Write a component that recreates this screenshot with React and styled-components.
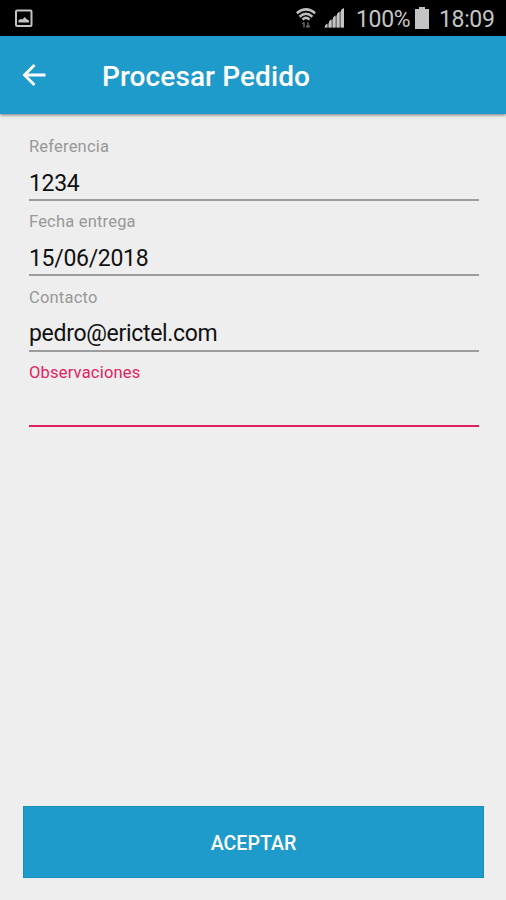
import styled, { createGlobalStyle } from "styled-components";

const GlobalStyle = createGlobalStyle`
  * {
    box-sizing: border-box;
  }

  body {
    margin: 0;
    font-family: Roboto, "Liberation Sans", sans-serif;
    background: #eeeeee;
  }
`;

const Screen = styled.div`
  display: flex;
  flex-direction: column;
  width: 506px;
  height: 900px;
  overflow: hidden;
  background: #eeeeee;
`;

const StatusBar = styled.div`
  display: flex;
  align-items: center;
  justify-content: space-between;
  height: 36px;
  padding: 0 11px 0 14px;
  background: #000;
  color: #c4c4c4;
  flex-shrink: 0;
`;

const StatusGroup = styled.div`
  display: flex;
  align-items: center;
`;

const StatusText = styled.span`
  width: ${({ $width }) => $width}px;
  margin-left: ${({ $gap }) => $gap}px;
  padding-top: 3px;
  font-size: 23px;
  line-height: 33px;
  letter-spacing: -0.35px;
  white-space: nowrap;
`;

const StatusIcon = styled.svg`
  display: block;
  margin-left: ${({ $gap }) => $gap || 0}px;
`;

const AppBar = styled.header`
  display: flex;
  align-items: center;
  height: 78px;
  padding: 0 22px;
  background: #1f9bcb;
  box-shadow: 0 1px 3px rgba(0, 0, 0, 0.5);
  flex-shrink: 0;
`;

const BackButton = styled.button`
  display: flex;
  width: 80px;
  padding: 0;
  border: none;
  background: none;
  color: #fff;
`;

const Title = styled.h1`
  margin: 0;
  padding-top: 3px;
  font-size: 28px;
  font-weight: 500;
  line-height: 36px;
  letter-spacing: 0.1px;
  color: #fff;
`;

const Form = styled.form`
  display: flex;
  flex-direction: column;
  flex: 1;
  padding: 22px 22px 22px 23px;
`;

const Fields = styled.div`
  display: flex;
  flex-direction: column;
  flex: 1;
  padding: 0 5px 0 6px;
`;

const Field = styled.label`
  display: flex;
  flex-direction: column;
  height: 75.3px;
  color: ${({ $active }) => ($active ? "#e32160" : "#989898")};
`;

const FieldLabel = styled.span`
  font-size: 16.5px;
  line-height: 21px;
  letter-spacing: 0.2px;
`;

const FieldInput = styled.input`
  width: 100%;
  height: 44px;
  padding: 10px 0 0;
  border: none;
  border-bottom: 2px solid ${({ $active }) => ($active ? "#e0215d" : "#9c9c9c")};
  border-radius: 0;
  outline: none;
  background: none;
  font-family: inherit;
  font-size: 23px;
  letter-spacing: -0.31px;
  color: #111;
`;

const SubmitButton = styled.button`
  height: 72px;
  padding: 2px 0 0;
  border: 1px solid #168fbe;
  background: #1f9bcb;
  font-family: inherit;
  font-size: 19.6px;
  font-weight: 500;
  color: #fff;
`;

const fields = [
  { id: "referencia", label: "Referencia", value: "1234" },
  { id: "fecha", label: "Fecha entrega", value: "15/06/2018" },
  { id: "contacto", label: "Contacto", value: "pedro@erictel.com" },
  { id: "observaciones", label: "Observaciones", value: "", active: true },
];

const PictureIcon = () => (
  <StatusIcon width="19" height="19" viewBox="0 0 19 19">
    <rect
      x="2"
      y="1.5"
      width="15.5"
      height="15.5"
      rx="1"
      fill="none"
      stroke="#c4c4c4"
      strokeWidth="2"
    />
    <path d="M4.5 13.5V11l2.5-1 1.5.5 2-2.5 2 2 2.5 1.5v2z" fill="#c4c4c4" />
  </StatusIcon>
);

const WifiIcon = () => (
  <StatusIcon width="20" height="20" viewBox="0 0 20 20">
    <g fill="none" stroke="#bdbdbd" strokeWidth="2.6">
      <path d="M.8 5.2Q10-2.3 19.2 5.2" />
      <path d="M3.6 8.7Q10 2.8 16.4 8.7" />
      <path d="M6.5 11.7Q10 8.2 13.5 11.7" />
    </g>
    <path
      d="M8 19.5v-5.2M6.3 16L8 14.2M12 14.2v5.3M10.3 17.6L12 19.4l1.7-1.8"
      fill="none"
      stroke="#5e5e5e"
      strokeWidth="1.6"
    />
  </StatusIcon>
);

const SignalIcon = () => (
  <StatusIcon $gap={8} width="20" height="20" viewBox="0 0 20 20">
    <path d="M0 19.5L20 0v19.5z" fill="#777" />
    <path
      d="M1 19.5v-2l2-2v4zM5 19.5v-6l2.4-2.4v8.4zM9 19.5V9.6l2.4-2.4v12.3zM13 19.5V5.8l2.4-2.4v16.1zM17 19.5V2l3-2v19.5z"
      fill="#c4c4c4"
    />
  </StatusIcon>
);

const BatteryIcon = () => (
  <StatusIcon $gap={5} width="14" height="22" viewBox="0 0 14 22">
    <path d="M4 0h6v2h4v20H0V2h4z" fill="#c4c4c4" />
  </StatusIcon>
);

const BackIcon = () => (
  <svg width="25" height="24" viewBox="0 0 25 24">
    <path
      d="M23.5 12H3M12.5 2L2.5 12l10 10"
      fill="none"
      stroke="currentColor"
      strokeWidth="2.8"
    />
  </svg>
);

const App = () => {
  return (
    <>
      <GlobalStyle />
      <Screen>
        <StatusBar>
          <PictureIcon />
          <StatusGroup>
            <WifiIcon />
            <SignalIcon />
            <StatusText $width={54} $gap={12}>
              100%
            </StatusText>
            <BatteryIcon />
            <StatusText $width={56} $gap={10}>
              18:09
            </StatusText>
          </StatusGroup>
        </StatusBar>
        <AppBar>
          <BackButton type="button" aria-label="Volver">
            <BackIcon />
          </BackButton>
          <Title>Procesar Pedido</Title>
        </AppBar>
        <Form>
          <Fields>
            {fields.map((field) => (
              <Field key={field.id} $active={field.active}>
                <FieldLabel>{field.label}</FieldLabel>
                <FieldInput
                  $active={field.active}
                  name={field.id}
                  defaultValue={field.value}
                />
              </Field>
            ))}
          </Fields>
          <SubmitButton type="button">ACEPTAR</SubmitButton>
        </Form>
      </Screen>
    </>
  );
};

export default App;
